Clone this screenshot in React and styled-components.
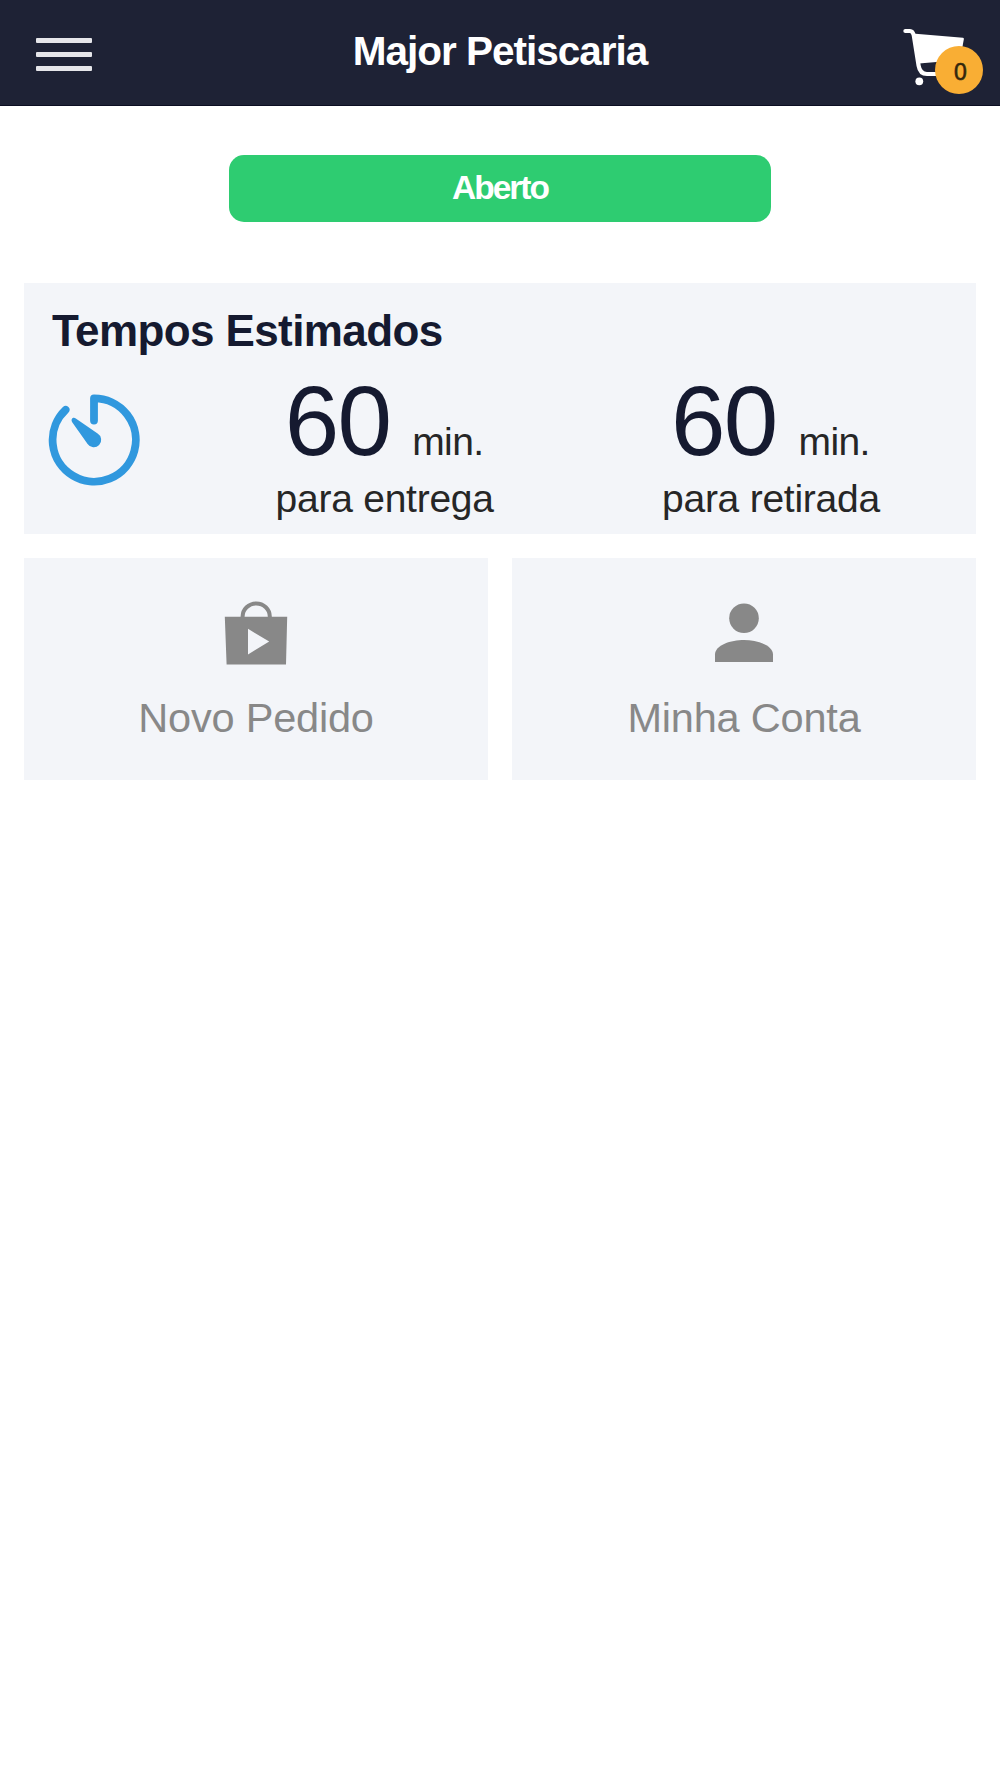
import React, { useState } from 'react';
import styled, { createGlobalStyle } from 'styled-components';

const TimerIcon = () => (
  <svg width='92' height='92' viewBox='-46 -46 92 92' fill='none'>
    <path
      d='M0 -19.5 V-41.6 A41.6 41.6 0 1 1 -28.4 -30.2'
      stroke='#3098de'
      strokeWidth='7.8'
      strokeLinecap='round'
      strokeLinejoin='round'
    />
    <path
      d='M-18.2 -21.6 L3.6 -6.4 A7.4 7.4 0 1 1 -6.4 4 L-21.8 -17.8 C-23.6 -20.8 -21 -23.4 -18.2 -21.6 Z'
      fill='#3098de'
    />
  </svg>
);

const BagIcon = () => (
  <svg width='64' height='64' viewBox='0 0 64 64'>
    <path d='M18.6 17 V15.6 A13.6 13.2 0 0 1 45.8 15.6 V17' fill='none' stroke='#888' strokeWidth='4' />
    <path
      fillRule='evenodd'
      fill='#888'
      d='M0.8 15.7 H63.2 L62 63.5 H2.6 Z M24 27.8 V53.4 L45.2 40.6 Z'
    />
  </svg>
);

const PersonIcon = () => (
  <svg width='64' height='64' viewBox='0 0 64 64'>
    <circle cx='32' cy='17.2' r='14.8' fill='#888' />
    <path d='M3 61 V53.5 C3 44 19 39 32 39 S61 44 61 53.5 V61 Z' fill='#888' />
  </svg>
);

const CartIcon = () => (
  <svg width='64' height='60' viewBox='0 0 64 60'>
    <path
      d='M3.4 3 H8 Q10.8 3 11.8 7.4 L16.6 37.6 Q18 46 25 46 H50'
      fill='none'
      stroke='#fff'
      strokeWidth='4.2'
      strokeLinecap='round'
    />
    <path d='M10.5 5.6 L61 9.8 Q62 10 61.9 11 L58 32 L17 35.4 Z' fill='#fff' />
    <circle cx='17.3' cy='53.3' r='3.9' fill='#fff' />
  </svg>
);

const times = [
  { id: 'entrega', minutes: 60, label: 'para entrega' },
  { id: 'retirada', minutes: 60, label: 'para retirada' },
];

const actions = [
  { id: 'pedido', label: 'Novo Pedido', icon: <BagIcon /> },
  { id: 'conta', label: 'Minha Conta', icon: <PersonIcon /> },
];

export default function App() {
  const [cartCount] = useState(0);

  return (
    <>
      <GlobalStyle />
      <Header>
        <MenuButton aria-label='Menu'>
          <Bar />
          <Bar />
          <Bar />
        </MenuButton>
        <Title>Major Petiscaria</Title>
        <CartButton aria-label='Carrinho'>
          <CartIcon />
          <Badge>{cartCount}</Badge>
        </CartButton>
      </Header>
      <Main>
        <Status>Aberto</Status>
        <TimesCard>
          <CardTitle>Tempos Estimados</CardTitle>
          <TimesRow>
            <TimerIcon />
            {times.map((time) => (
              <Time key={time.id}>
                <Amount>
                  <Minutes>{time.minutes}</Minutes>
                  <span>min.</span>
                </Amount>
                <TimeLabel>{time.label}</TimeLabel>
              </Time>
            ))}
          </TimesRow>
        </TimesCard>
        <Actions>
          {actions.map((action) => (
            <Action key={action.id}>
              {action.icon}
              <span>{action.label}</span>
            </Action>
          ))}
        </Actions>
      </Main>
    </>
  );
}

const GlobalStyle = createGlobalStyle`
  * {
    box-sizing: border-box;
  }

  body {
    margin: 0;
    background: #fff;
    font-family: 'Liberation Sans', Arial, sans-serif;
  }

  svg {
    display: block;
    flex: none;
  }

  button {
    border: none;
    padding: 0;
    font-family: inherit;
    cursor: pointer;
  }
`;

const Header = styled.header`
  display: grid;
  grid-template-columns: 1fr auto 1fr;
  height: 106px;
  padding: 0 17px 0 36px;
  background: #1e2235;
  border-bottom: 1px solid #0b0e22;
`;

const MenuButton = styled.button`
  display: flex;
  flex-direction: column;
  gap: 9px;
  width: 56px;
  height: 33px;
  margin-top: 38px;
  background: none;
`;

const Bar = styled.span`
  width: 56px;
  height: 5px;
  border-radius: 1px;
  background: #e6e6ea;
`;

const Title = styled.h1`
  margin: 0 0 0 -19px;
  color: #fff;
  font-size: 40.5px;
  line-height: 103px;
  letter-spacing: -1px;
`;

const CartButton = styled.button`
  position: relative;
  justify-self: end;
  width: 81px;
  height: 60px;
  margin-top: 28px;
  background: none;
`;

const Badge = styled.span`
  position: absolute;
  right: 0;
  top: 18px;
  width: 48px;
  height: 48px;
  padding-left: 3px;
  border-radius: 50%;
  background: #f9ae34;
  color: #33270d;
  font-size: 23px;
  line-height: 52px;
  text-align: center;
  -webkit-text-stroke: 0.6px #33270d;
`;

const Main = styled.main`
  display: flex;
  flex-direction: column;
  padding: 48.5px 24px 0;
`;

const Status = styled.div`
  align-self: center;
  width: 541.5px;
  height: 67.5px;
  margin-bottom: 60.5px;
  border-radius: 15px;
  background: #2ecc71;
  color: #fff;
  font-size: 33.5px;
  font-weight: bold;
  line-height: 65px;
  letter-spacing: -2px;
  text-align: center;
`;

const TimesCard = styled.section`
  height: 251px;
  margin-bottom: 24px;
  padding-top: 23px;
  background: #f3f5f9;
`;

const CardTitle = styled.h2`
  margin: 0;
  padding-left: 28px;
  color: #151a30;
  font-size: 44px;
  line-height: 50px;
  letter-spacing: -0.6px;
`;

const TimesRow = styled.div`
  display: grid;
  grid-template-columns: 143.5px 386.3px 386.3px;
  padding-left: 24px;

  > svg {
    margin-top: 38px;
  }
`;

const Time = styled.div`
  display: flex;
  flex-direction: column;
  align-items: center;
  color: #262626;
  font-size: 39px;
`;

const Amount = styled.div`
  display: flex;
  align-items: baseline;
  gap: 22px;
  height: 113px;
  padding-right: 1px;
  line-height: 131px;
  letter-spacing: -0.6px;
`;

const Minutes = styled.span`
  color: #151a30;
  font-size: 98px;
  letter-spacing: -1.8px;
`;

const TimeLabel = styled.div`
  line-height: 60px;
  letter-spacing: -0.25px;
`;

const Actions = styled.div`
  display: grid;
  grid-template-columns: 1fr 1fr;
  gap: 24px;
`;

const Action = styled.button`
  display: flex;
  flex-direction: column;
  align-items: center;
  gap: 28px;
  height: 222px;
  padding-top: 43px;
  background: #f3f5f9;
  color: #888;
  font-size: 41.5px;
  line-height: 50px;
  letter-spacing: -0.2px;
`;
